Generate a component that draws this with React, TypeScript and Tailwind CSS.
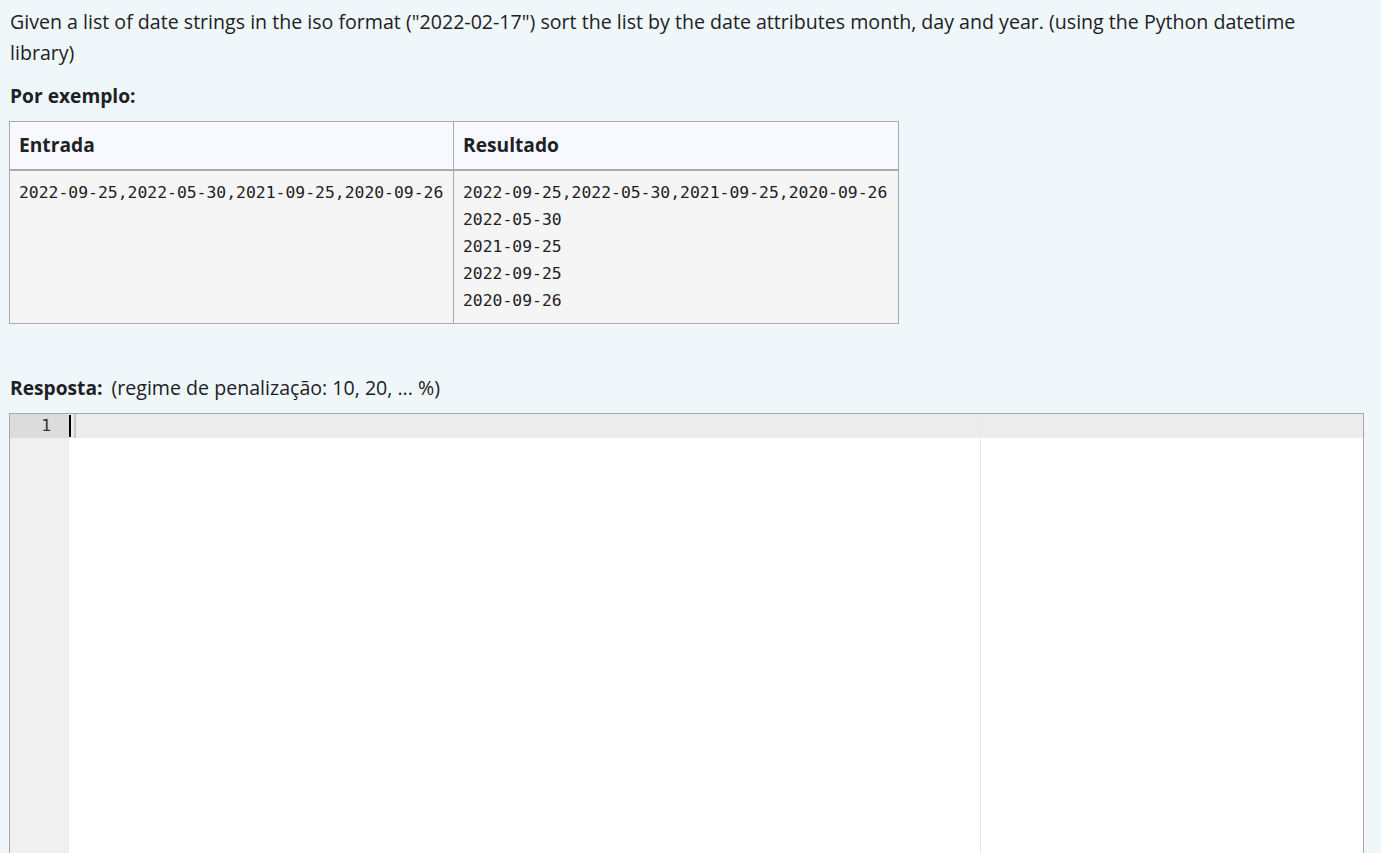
const results = ["2022-09-25,2022-05-30,2021-09-25,2020-09-26", "2022-05-30", "2021-09-25", "2022-09-25", "2020-09-26"];

const mono = "font-['DejaVu_Sans_Mono','Liberation_Mono',monospace]";

export default function App() {
  return (
    <div className="min-h-[853px] bg-[#eff7fa] font-['Open_Sans','Noto_Sans',sans-serif] text-[#1d2125]">
      <div className="px-[10px] pt-[6px]">
        <p className="max-w-[1330px] text-[19.6px] leading-[31px]">
          Given a list of date strings in the iso format ("2022-02-17") sort the list by the date attributes month, day and year. (using the Python datetime library)
        </p>
        <p className="mt-[12px] text-[19.2px] font-bold leading-[31px]">Por exemplo:</p>

        <table className="mt-[10px] -ml-px border-collapse border border-[#ababab]">
          <thead>
            <tr className="bg-[#f8f9fe]">
              <th className="h-[48px] w-[444px] border-r border-b-2 border-[#ababab] px-[9px] text-left text-[19.2px] font-bold">Entrada</th>
              <th className="h-[48px] w-[445px] border-b-2 border-[#ababab] px-[9px] text-left text-[19.2px] font-bold">Resultado</th>
            </tr>
          </thead>
          <tbody>
            <tr className="bg-[#f5f5f5] align-top">
              <td className={`border-r border-[#ababab] px-[9px] pt-[8px] pb-[9px] text-[16.4px] leading-[27px] ${mono}`}>
                2022-09-25,2022-05-30,2021-09-25,2020-09-26
              </td>
              <td className={`px-[9px] pt-[8px] pb-[9px] text-[16.4px] leading-[27px] ${mono}`}>
                {results.map((r, i) => (
                  <div key={i}>{r}</div>
                ))}
              </td>
            </tr>
          </tbody>
        </table>

        <p className="mt-[48px] text-[19.6px] leading-[31px]">
          <span className="text-[19.2px] font-bold">Resposta:</span>
          <span className="ml-[9px]">(regime de penalização: 10, 20, ... %)</span>
        </p>
      </div>

      <div className="mt-[10px] ml-[9px] mr-[17px] flex h-[460px] border border-[#a8a8a8] border-b-0 bg-white">
        <div className="w-[59px] shrink-0 bg-[#f0f0f0]">
          <div className={`h-[24px] bg-[#dcdcdc] pr-[18px] text-right text-[16.4px] leading-[24px] text-[#333] ${mono}`}>1</div>
        </div>
        <div className="relative flex-1">
          <div className="h-[24px] bg-[#ececec]" />
          <div className="absolute left-0 top-[1px] h-[22px] w-[2px] bg-black" />
          <div className="absolute left-[5px] top-0 h-[24px] w-[2px] bg-[#c8c8c8]" />
          <div className="absolute left-[911px] top-0 bottom-0 w-px bg-[#e8e8e8]" />
        </div>
      </div>
    </div>
  );
}
